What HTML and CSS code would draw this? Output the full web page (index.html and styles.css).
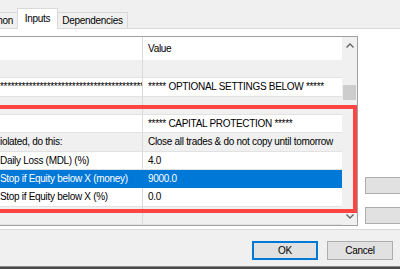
FILE: index.html
```html
<!DOCTYPE html>
<html lang="en">
<head>
  <meta charset="UTF-8">
  <title>Expert Properties - Inputs</title>
  <link rel="stylesheet" href="styles.css">
</head>
<body>
  <div class="dialog">
    <div class="tabs">
      <div class="tab tab-cut">Common</div>
      <div class="tab active">Inputs</div>
      <div class="tab tab-dep">Dependencies</div>
    </div>

    <div class="panel">
      <div class="grid">
        <div class="grid-body">
          <div class="row head"><div class="c1"></div><div class="c2">Value</div></div>
          <div class="row alt"><div class="c1"></div><div class="c2"></div></div>
          <div class="row"><div class="c1">****************************************</div><div class="c2">***** OPTIONAL SETTINGS BELOW *****</div></div>
          <div class="row alt"><div class="c1"></div><div class="c2"></div></div>
          <div class="row"><div class="c1"></div><div class="c2">***** CAPITAL PROTECTION *****</div></div>
          <div class="row alt"><div class="c1">iolated, do this:</div><div class="c2">Close all trades &amp; do not copy until tomorrow</div></div>
          <div class="row"><div class="c1">Daily Loss (MDL) (%)</div><div class="c2">4.0</div></div>
          <div class="row selected"><div class="c1">Stop if Equity below X (money)</div><div class="c2">9000.0</div></div>
          <div class="row"><div class="c1">Stop if Equity below X (%)</div><div class="c2">0.0</div></div>
          <div class="row alt"><div class="c1"></div><div class="c2"></div></div>
        </div>
        <div class="scrollbar">
          <div class="arrow">
            <svg width="8" height="5" viewBox="0 0 8 5"><polyline points="0.5,4.5 4,1 7.5,4.5" fill="none" stroke="#606060" stroke-width="1.3"/></svg>
          </div>
          <div class="track"><div class="thumb"></div></div>
          <div class="arrow">
            <svg width="8" height="5" viewBox="0 0 8 5"><polyline points="0.5,0.5 4,4 7.5,0.5" fill="none" stroke="#606060" stroke-width="1.3"/></svg>
          </div>
        </div>
        <div class="highlight"></div>
      </div>

      <div class="side">
        <div class="side-btn"></div>
        <div class="side-btn"></div>
      </div>
    </div>

    <div class="footer">
      <button class="btn default">OK</button>
      <button class="btn">Cancel</button>
    </div>
    <div class="edge"></div>
  </div>
</body>
</html>
```

FILE: styles.css
```css
body {
  margin: 0;
  background: #f0f0f0;
  font-family: "Liberation Sans", Arial, sans-serif;
  font-size: 10px;
  letter-spacing: -0.3px;
  color: #000;
  overflow: hidden;
}
.dialog {
  width: 400px;
  height: 269px;
  display: flex;
  flex-direction: column;
  overflow: hidden;
}

/* tabs */
.tabs {
  height: 28px;
  flex: none;
  display: flex;
  align-items: flex-end;
}
.tab {
  box-sizing: border-box;
  height: 16px;
  line-height: 15px;
  border: 1px solid #d9d9d9;
  border-bottom: none;
  background: #f0f0f0;
  text-align: center;
  white-space: nowrap;
}
.tab-cut {
  margin-left: -30px;
  width: 47px;
  border-right: none;
  text-align: right;
  padding-right: 4px;
  overflow: hidden;
}
.tab.active {
  position: relative;
  z-index: 1;
  width: 41px;
  height: 21px;
  line-height: 19px;
  margin-bottom: -1px;
  background: #fff;
}
.tab-dep {
  width: 70px;
  border-left: none;
}

/* tab page */
.panel {
  box-sizing: border-box;
  height: 202px;
  flex: none;
  background: #fff;
  border-top: 1px solid #d9d9d9;
  border-bottom: 1px solid #d9d9d9;
  padding-top: 7px;
  display: flex;
  align-items: flex-start;
}
.grid {
  position: relative;
  box-sizing: border-box;
  width: 359px;
  height: 190px;
  margin-left: -1px;
  border: 1px solid #a0a0a0;
  display: flex;
  flex: none;
}
.grid-body {
  width: 342px;
}
.row {
  display: flex;
  height: 18.33px;
  background: #fff;
}
.row.head {
  height: 23px;
}
.row.alt {
  background: #f0f0f0;
}
.row.selected {
  background: #0078d7;
  color: #fff;
}
.c1, .c2 {
  box-sizing: border-box;
  display: flex;
  align-items: center;
  white-space: nowrap;
  overflow: hidden;
  border-bottom: 1px solid #e2e2e2;
}
.c1 {
  width: 143px;
  border-right: 1px solid #dadada;
}
.c2 {
  flex: 1;
  padding-left: 5px;
}
.row.head .c1, .row.head .c2 {
  border-bottom: none;
}
.row.selected .c1, .row.selected .c2 {
  border-color: #0078d7;
}

.scrollbar {
  width: 15px;
  background: #f0f0f0;
  display: flex;
  flex-direction: column;
}
.arrow {
  height: 17px;
  display: flex;
  align-items: center;
  justify-content: center;
}
.track {
  flex: 1;
  padding-top: 31px;
}
.thumb {
  width: 13px;
  height: 15px;
  margin-left: 1px;
  background: #cdcdcd;
}

/* annotation box drawn over the list */
.highlight {
  position: absolute;
  left: -10px;
  top: 68px;
  width: 367px;
  height: 108px;
  box-sizing: border-box;
  border: 4px solid #ff4444;
  pointer-events: none;
}

.side {
  margin-left: 7px;
  padding-top: 141px;
  display: flex;
  flex-direction: column;
  gap: 13px;
}
.side-btn {
  width: 60px;
  height: 17px;
  box-sizing: border-box;
  background: #e1e1e1;
  border: 1px solid #adadad;
}

/* bottom buttons */
.footer {
  flex: none;
  height: 36px;
  box-sizing: border-box;
  padding: 11px 7px 0 0;
  display: flex;
  justify-content: flex-end;
  align-items: flex-start;
  gap: 9px;
}
.btn {
  width: 66px;
  height: 19px;
  padding: 0;
  font-family: inherit;
  font-size: 10px;
  letter-spacing: -0.3px;
  color: #000;
  background: #e1e1e1;
  border: 1px solid #adadad;
}
.btn.default {
  border-color: #0078d7;
  box-shadow: inset 0 0 0 1px #0078d7;
}
.edge {
  flex: 1;
  border-top: 1px solid #888;
  background: #4a4a4a;
}
```
